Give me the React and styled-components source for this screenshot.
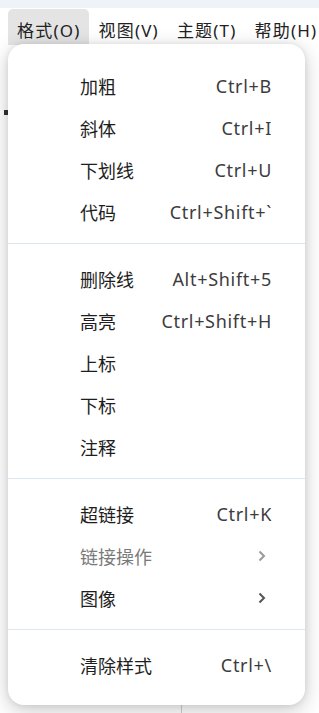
import React from "react";
import styled, { createGlobalStyle } from "styled-components";

const Global = createGlobalStyle`
  html, body { margin: 0; padding: 0; background: #ffffff; }
  body { font-family: "Noto Sans", "Noto Sans CJK SC", sans-serif; }
  * { box-sizing: border-box; }
`;

const Page = styled.div`
  position: relative;
  width: 319px;
  height: 713px;
  overflow: hidden;
  display: flex;
  flex-direction: column;
  background: #ffffff;
`;

const TopStrip = styled.div`
  height: 8px;
  background: #eef3fa;
  flex: none;
`;

const MenuBar = styled.div`
  height: 38px;
  flex: none;
  display: flex;
  align-items: flex-start;
  padding: 1px 0 0 8px;
  background: #ffffff;
`;

const BarItem = styled.div`
  height: 36px;
  padding: 4px ${(p) => (p.$last ? "0" : "9px")} 0 9px;
  display: flex;
  align-items: center;
  font-size: 17px;
  letter-spacing: 1.2px;
  color: #222;
  border-radius: 5px 5px 0 0;
  background: ${(p) => (p.$active ? "#e4e4e4" : "transparent")};
  white-space: nowrap;
`;

const Content = styled.div`
  flex: 1;
  display: grid;
  grid-template-columns: 181px 1fr;
`;

const LeftPane = styled.div`
  padding: 64px 0 0 4px;
`;

const RightPane = styled.div`
  border-left: 1px solid #cfcfcf;
`;

const Caret = styled.div`
  width: 4px;
  height: 5px;
  background: #333;
`;

const Dropdown = styled.div`
  position: absolute;
  left: 8px;
  top: 44px;
  width: 297px;
  padding: 7px 0 9px;
  background: #ffffff;
  border-radius: 16px;
  box-shadow: 0 5px 20px rgba(0, 0, 0, 0.22), 0 0 6px rgba(0, 0, 0, 0.08);
`;

const Group = styled.div`
  padding: 14px 0 10px;
`;

const Separator = styled.div`
  height: 1px;
  background: #dce5f2;
`;

const Row = styled.div`
  height: 42px;
  display: flex;
  align-items: center;
  justify-content: space-between;
  padding: 0 33px 0 72px;
`;

const Label = styled.span`
  font-size: 18px;
  color: ${(p) => (p.$disabled ? "#7a7a7a" : "#1e1e1e")};
`;

const Shortcut = styled.span`
  font-size: 18px;
  letter-spacing: 0.7px;
  color: #3c3c3c;
  white-space: nowrap;
`;

const Chevron = styled.svg`
  width: 8px;
  height: 12px;
  margin-right: 6px;
  color: ${(p) => (p.$disabled ? "#9a9a9a" : "#555")};
`;

const Arrow = ({ disabled }) => (
  <Chevron $disabled={disabled} viewBox="0 0 8 12">
    <path d="M1.5 1.5 L6 6 L1.5 10.5" fill="none" stroke="currentColor" strokeWidth="2" />
  </Chevron>
);

const groups = [
  [
    { label: "加粗", sc: "Ctrl+B" },
    { label: "斜体", sc: "Ctrl+I" },
    { label: "下划线", sc: "Ctrl+U" },
    { label: "代码", sc: "Ctrl+Shift+`" },
  ],
  [
    { label: "删除线", sc: "Alt+Shift+5" },
    { label: "高亮", sc: "Ctrl+Shift+H" },
    { label: "上标" },
    { label: "下标" },
    { label: "注释" },
  ],
  [
    { label: "超链接", sc: "Ctrl+K" },
    { label: "链接操作", sub: true, disabled: true },
    { label: "图像", sub: true },
  ],
  [{ label: "清除样式", sc: "Ctrl+\\" }],
];

export default function App() {
  return (
    <Page>
      <Global />
      <TopStrip />
      <MenuBar>
        <BarItem $active>格式(O)</BarItem>
        <BarItem>视图(V)</BarItem>
        <BarItem>主题(T)</BarItem>
        <BarItem $last>帮助(H)</BarItem>
      </MenuBar>
      <Content>
        <LeftPane>
          <Caret />
        </LeftPane>
        <RightPane />
      </Content>
      <Dropdown>
        {groups.map((g, gi) => (
          <React.Fragment key={gi}>
            {gi > 0 && <Separator />}
            <Group>
              {g.map((it) => (
                <Row key={it.label}>
                  <Label $disabled={it.disabled}>{it.label}</Label>
                  {it.sc && <Shortcut>{it.sc}</Shortcut>}
                  {it.sub && <Arrow disabled={it.disabled} />}
                </Row>
              ))}
            </Group>
          </React.Fragment>
        ))}
      </Dropdown>
    </Page>
  );
}
